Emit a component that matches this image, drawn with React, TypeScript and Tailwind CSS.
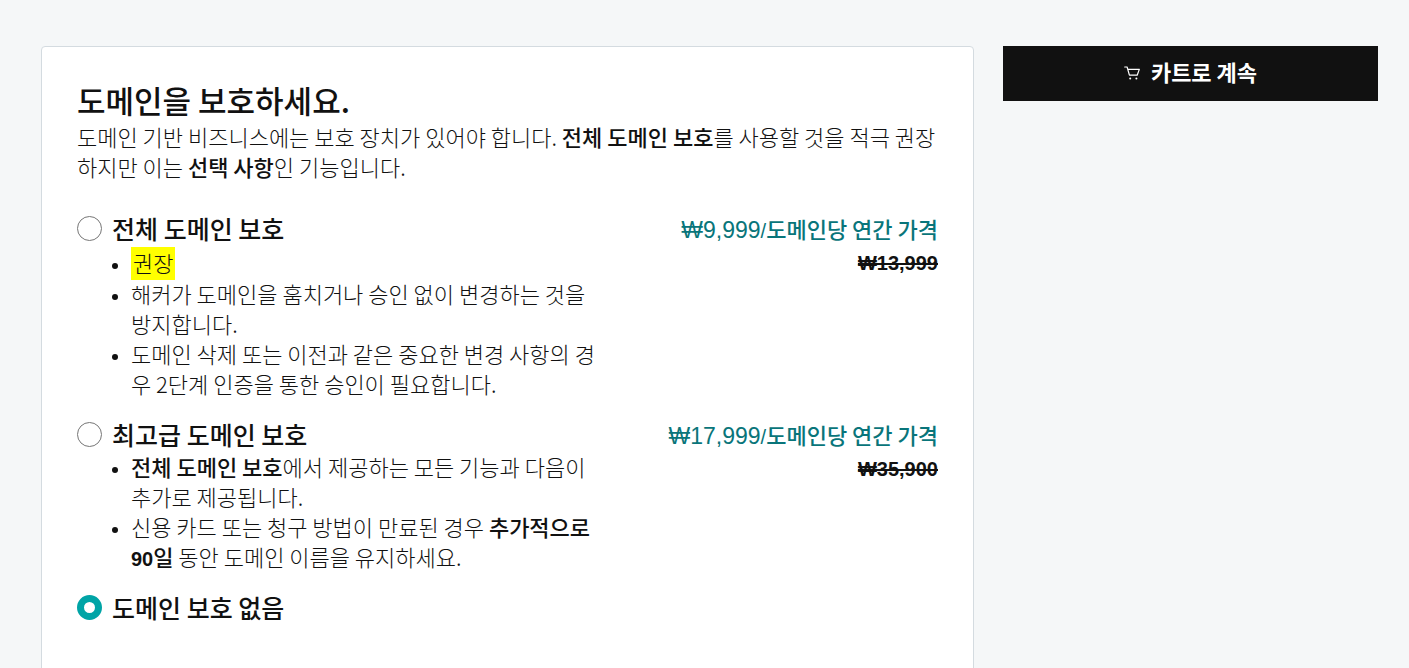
import type { ReactNode } from 'react'

function CartIcon() {
    return (
        <svg viewBox="0 0 16 14" className="h-3.5 w-4" fill="none" stroke="currentColor" strokeWidth="1.2" strokeLinecap="round" strokeLinejoin="round" aria-hidden="true">
            <path d="M0.7 1h2.4l2.3 8.2h7.8L15.3 3.4H3.9" />
            <circle cx="6.2" cy="12.6" r="1" fill="currentColor" stroke="none" />
            <circle cx="12.4" cy="12.6" r="1" fill="currentColor" stroke="none" />
        </svg>
    )
}

type OptionProps = {
    id: string
    title: string
    price?: string
    oldPrice?: string
    checked?: boolean
    children?: ReactNode
}

function ProtectionOption({ id, title, price, oldPrice, checked, children }: OptionProps) {
    return (
        <div className="flex justify-between">
            <div className="flex gap-[10px]">
                <input
                    type="radio"
                    id={id}
                    name="protection"
                    defaultChecked={checked}
                    className="mt-[5px] size-[25px] shrink-0 appearance-none rounded-full border border-[#767676] bg-white checked:border-[7px] checked:border-[#00a4a6]"
                />
                <div className="max-w-[487px]">
                    <label htmlFor={id} className="block text-[25px] leading-[34px] font-medium">{title}</label>
                    {children && (
                        <ul className="list-disc pl-[19px] marker:font-['Liberation_Sans',sans-serif] marker:text-[20px]">{children}</ul>
                    )}
                </div>
            </div>
            {price && (
                <div className="shrink-0 text-right">
                    <p className="leading-[34px] text-[#09757a]">
                        <span className="font-['Liberation_Sans',sans-serif] text-[23px] font-normal">{price}</span>
                        <span className="font-['Liberation_Sans',sans-serif] text-[20px] font-normal">/</span>
                        <span className="font-medium">도메인당 연간 가격</span>
                    </p>
                    <s className="block font-['Liberation_Sans',sans-serif] text-[20px] font-bold">{oldPrice}</s>
                </div>
            )}
        </div>
    )
}

export default function App() {
    return (
        <div className="flex min-h-screen items-start gap-[29px] bg-[#f5f7f8] pt-[46px] pr-[31px] pb-8 pl-[41px] font-['Noto_Sans_CJK_KR',sans-serif] text-[22px] leading-[30px] font-light text-[#111]">
            <main className="min-w-0 flex-1 rounded border border-[#d4dbe0] bg-white px-[35px] pt-8 pb-16">
                <h1 className="text-[31px] leading-[42px] font-medium">도메인을 보호하세요.</h1>
                <p>
                    도메인 기반 비즈니스에는 보호 장치가 있어야 합니다. <b className="font-medium">전체 도메인 보호</b>를 사용할 것을 적극 권장하지만 이는 <b className="font-medium">선택 사항</b>인 기능입니다.
                </p>

                <div className="mt-[30px] flex flex-col gap-[19px]">
                    <ProtectionOption id="full" title="전체 도메인 보호" price="₩9,999" oldPrice="₩13,999">
                        <li className="-mb-0.5 pt-0.5">
                            <mark className="inline-block bg-[#ff0] px-0.5 pb-[3px] text-[#111]">권장</mark>
                        </li>
                        <li>해커가 도메인을 훔치거나 승인 없이 변경하는 것을 방지합니다.</li>
                        <li>도메인 삭제 또는 이전과 같은 중요한 변경 사항의 경우 2단계 인증을 통한 승인이 필요합니다.</li>
                    </ProtectionOption>
                    <ProtectionOption id="ultimate" title="최고급 도메인 보호" price="₩17,999" oldPrice="₩35,900">
                        <li><b className="font-medium">전체 도메인 보호</b>에서 제공하는 모든 기능과 다음이 추가로 제공됩니다.</li>
                        <li>
                            신용 카드 또는 청구 방법이 만료된 경우 <b className="font-medium">추가적으로 <span className="font-['Liberation_Sans',sans-serif] text-[20px] leading-none font-bold">90</span>일</b> 동안 도메인 이름을 유지하세요.
                        </li>
                    </ProtectionOption>
                    <ProtectionOption id="none" title="도메인 보호 없음" checked />
                </div>
            </main>

            <aside className="w-[375px] shrink-0">
                <button type="button" className="flex h-[55px] w-full items-center justify-center gap-[11px] bg-[#111] pb-0.5 font-bold text-white">
                    <CartIcon />
                    <span className="pb-1">카트로 계속</span>
                </button>
            </aside>
        </div>
    )
}
